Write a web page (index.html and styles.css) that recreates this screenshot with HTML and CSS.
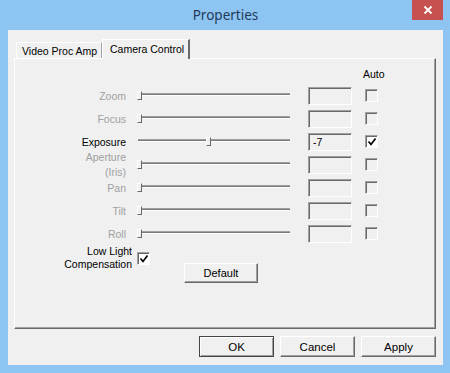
FILE: index.html
```html
<!DOCTYPE html>
<html>
<head>
<meta charset="utf-8">
<link rel="stylesheet" href="styles.css">
</head>
<body>
<div class="window">
  <div class="titlebar">
    <span class="title">Properties</span>
    <div class="close"><svg width="10" height="10" viewBox="0 0 10 10"><path d="M1.5 1.5 L8.5 8.5 M8.5 1.5 L1.5 8.5" stroke="#fff" stroke-width="1.8"/></svg></div>
  </div>
  <div class="client">
    <div class="tabs">
      <div class="tab">Video Proc Amp</div>
      <div class="tab active">Camera Control</div>
    </div>
    <div class="panel">
      <div class="auto-head">Auto</div>
      <div class="row">
        <div class="label dis">Zoom</div>
        <div class="slider"><div class="track"></div><div class="thumb" style="left:1px"></div></div>
        <div class="edit"></div>
        <div class="check"></div>
      </div>
      <div class="row">
        <div class="label dis">Focus</div>
        <div class="slider"><div class="track"></div><div class="thumb" style="left:1px"></div></div>
        <div class="edit"></div>
        <div class="check"></div>
      </div>
      <div class="row">
        <div class="label">Exposure</div>
        <div class="slider"><div class="track"></div><div class="thumb" style="left:70px"></div></div>
        <div class="edit on">-7</div>
        <div class="check on"><svg width="10" height="10" viewBox="0 0 10 10"><path d="M1.5 4.5 L4 7.5 L8.5 1.5" fill="none" stroke="#000" stroke-width="1.7"/></svg></div>
      </div>
      <div class="row">
        <div class="label dis two">Aperture<br>(Iris)</div>
        <div class="slider"><div class="track"></div><div class="thumb" style="left:1px"></div></div>
        <div class="edit"></div>
        <div class="check"></div>
      </div>
      <div class="row">
        <div class="label dis">Pan</div>
        <div class="slider"><div class="track"></div><div class="thumb" style="left:1px"></div></div>
        <div class="edit"></div>
        <div class="check"></div>
      </div>
      <div class="row">
        <div class="label dis">Tilt</div>
        <div class="slider"><div class="track"></div><div class="thumb" style="left:1px"></div></div>
        <div class="edit"></div>
        <div class="check"></div>
      </div>
      <div class="row">
        <div class="label dis">Roll</div>
        <div class="slider"><div class="track"></div><div class="thumb" style="left:1px"></div></div>
        <div class="edit"></div>
        <div class="check"></div>
      </div>
      <div class="lowlight">
        <div class="ll-label">Low Light<br>Compensation</div>
        <div class="check on ll-check"><svg width="10" height="10" viewBox="0 0 10 10"><path d="M1.5 4.5 L4 7.5 L8.5 1.5" fill="none" stroke="#000" stroke-width="1.7"/></svg></div>
        <div class="btn default-btn">Default</div>
      </div>
    </div>
    <div class="buttons">
      <div class="btn main ok">OK</div>
      <div class="btn main">Cancel</div>
      <div class="btn main">Apply</div>
    </div>
  </div>
</div>
</body>
</html>
```
FILE: styles.css
```css
html, body {
  margin: 0;
  padding: 0;
}
body {
  background: #8ec4f2;
  font-family: "Liberation Sans", Arial, sans-serif;
  font-size: 10.5px;
  color: #000;
}
.window {
  width: 450px;
  height: 373px;
  display: flex;
  flex-direction: column;
}
.titlebar {
  height: 30px;
  display: flex;
  align-items: center;
  justify-content: center;
  position: relative;
}
.title {
  font-family: "Noto Sans", "Open Sans", sans-serif;
  font-size: 13.5px;
  color: #213c5a;
  margin-left: 1px;
}
.close {
  position: absolute;
  right: 7px;
  top: 0;
  width: 31px;
  height: 20px;
  background: #c75050;
  display: flex;
  align-items: center;
  justify-content: center;
}
.client {
  margin: 0 7px 0 8px;
  height: 335px;
  background: #f0f0f0;
  padding: 9px 7px 0 6px;
  box-sizing: border-box;
  display: flex;
  flex-direction: column;
}
.tabs {
  display: flex;
  align-items: flex-end;
  height: 19px;
  margin-left: 2px;
  position: relative;
  z-index: 1;
}
.tab {
  height: 16px;
  width: 86px;
  box-sizing: border-box;
  border-top: 1px solid #fff;
  border-left: 1px solid #fff;
  border-right: 1px solid #a0a0a0;
  padding: 2px 0 0 5px;
  line-height: 13px;
  white-space: nowrap;
}
.tab.active {
  height: 20px;
  width: 88px;
  margin-bottom: -1px;
  background: #f0f0f0;
  border-right: 2px solid #696969;
  padding: 2px 0 0 7px;
  line-height: 14px;
}
.panel {
  height: 271px;
  box-sizing: border-box;
  border-top: 1px solid #fff;
  border-left: 1px solid #fff;
  border-right: 1px solid #696969;
  border-bottom: 1px solid #696969;
  box-shadow: inset -1px -1px 0 #a0a0a0;
  padding-top: 9px;
}
.auto-head {
  height: 13px;
  line-height: 13px;
  padding-left: 348px;
  margin-bottom: 3px;
}
.row {
  display: flex;
  align-items: center;
  height: 23px;
}
.label {
  width: 111px;
  text-align: right;
  white-space: nowrap;
}
.dis {
  color: #a0a0a0;
}
.label.two {
  align-self: flex-start;
  margin-top: -3px;
  line-height: 15px;
}
.slider {
  width: 156px;
  height: 23px;
  margin-left: 10px;
  position: relative;
}
.track {
  margin: 9px 2px 0 2px;
  height: 1px;
  background: #7a7a7a;
  border-top: 1px solid #a0a0a0;
  border-bottom: 1px solid #fff;
}
.thumb {
  position: absolute;
  top: 7px;
  width: 5px;
  height: 9px;
  box-sizing: border-box;
  background: #f0f0f0;
  border-top: 1px solid #fff;
  border-left: 1px solid #fff;
  border-right: 1px solid #696969;
  border-bottom: 1px solid #696969;
}
.edit {
  margin-left: 16px;
  width: 44px;
  height: 18px;
  box-sizing: border-box;
  border-top: 1px solid #a0a0a0;
  border-left: 1px solid #a0a0a0;
  border-right: 1px solid #fff;
  border-bottom: 1px solid #fff;
  box-shadow: inset 1px 1px 0 #696969;
  background: #f0f0f0;
  padding: 2px 0 0 4px;
  line-height: 13px;
}
.check {
  margin-left: 13px;
  width: 13px;
  height: 13px;
  box-sizing: border-box;
  border-top: 1px solid #a0a0a0;
  border-left: 1px solid #a0a0a0;
  border-right: 1px solid #fff;
  border-bottom: 1px solid #fff;
  box-shadow: inset 1px 1px 0 #696969;
  background: #f0f0f0;
  display: flex;
  align-items: center;
  justify-content: center;
}
.check.on {
  background: #fff;
}
.lowlight {
  display: flex;
  align-items: flex-start;
}
.ll-label {
  width: 117px;
  text-align: right;
  line-height: 13px;
  white-space: nowrap;
}
.ll-check {
  margin-left: 5px;
  margin-top: 7px;
}
.btn {
  box-sizing: border-box;
  background: #f0f0f0;
  border-top: 1px solid #fff;
  border-left: 1px solid #fff;
  border-right: 1px solid #696969;
  border-bottom: 1px solid #696969;
  box-shadow: inset -1px -1px 0 #a0a0a0;
  display: flex;
  align-items: center;
  justify-content: center;
  font-size: 11px;
}
.default-btn {
  margin-left: 34px;
  margin-top: 18px;
  width: 74px;
  height: 20px;
}
.buttons {
  display: flex;
  justify-content: flex-end;
  gap: 6px;
  margin-top: 7px;
}
.btn.main {
  width: 75px;
  height: 21px;
  font-size: 11.5px;
}
.btn.ok {
  border: 1px solid #444;
  box-shadow: inset 1px 1px 0 #fff, inset -1px -1px 0 #a0a0a0;
}
```
